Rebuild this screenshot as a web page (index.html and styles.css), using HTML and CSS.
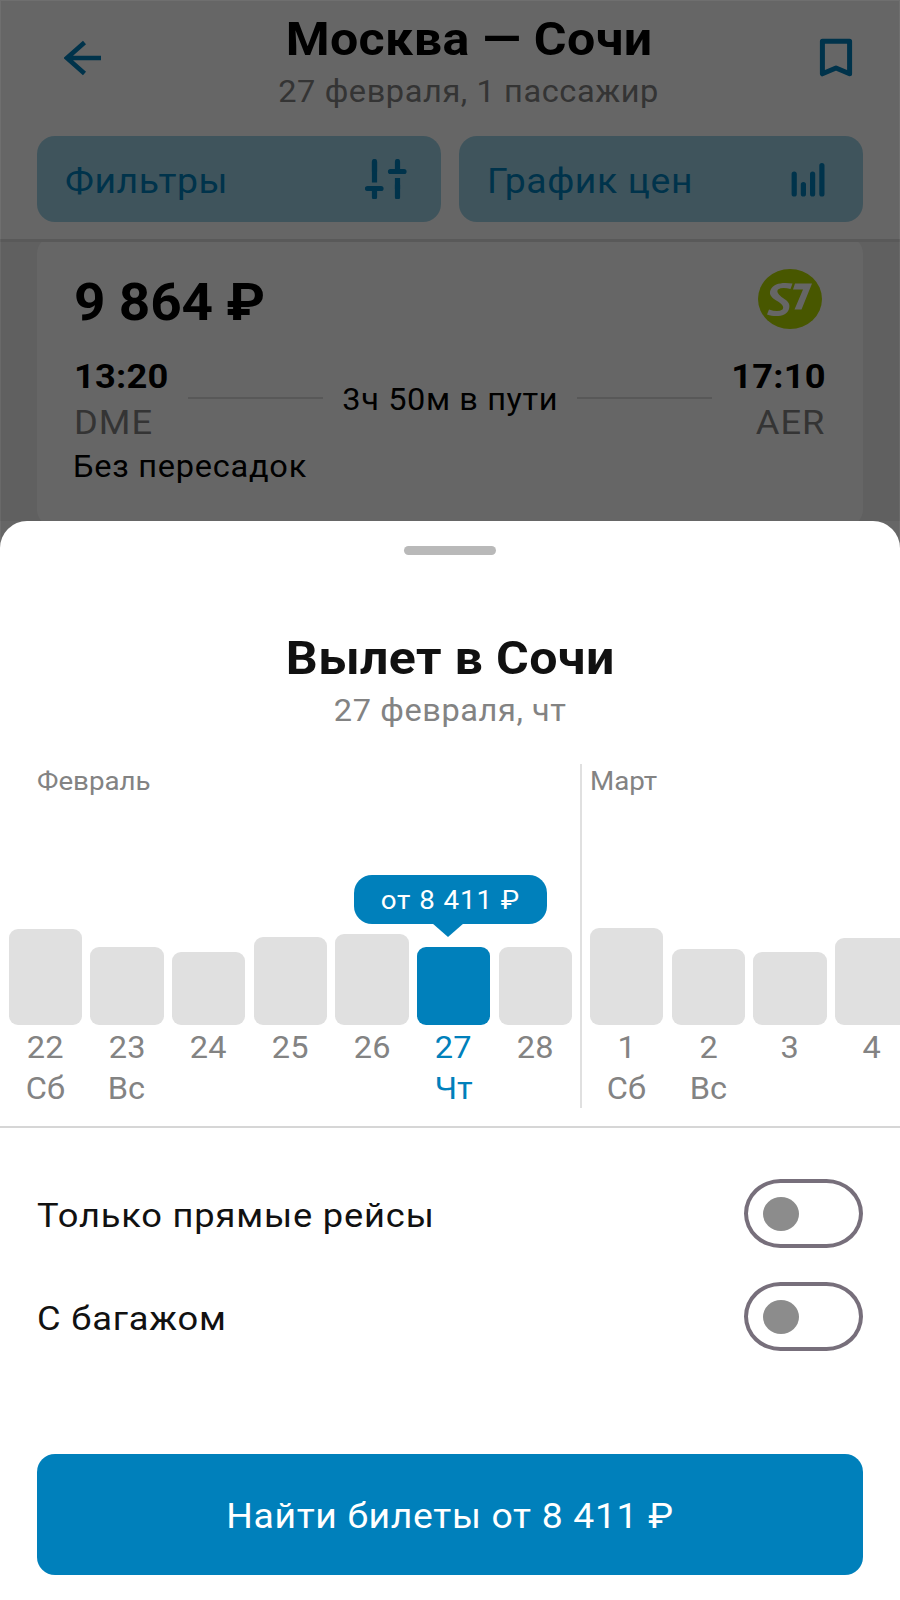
FILE: index.html
```html
<!DOCTYPE html>
<html lang="ru">
<head>
<meta charset="utf-8">
<title>Москва — Сочи</title>
<link rel="stylesheet" href="styles.css">
</head>
<body>
<div class="screen">
  <div class="results">
    <header class="header">
      <div class="topbar">
        <svg class="back" width="38" height="36" viewBox="0 0 38 36"><path d="M37 18H3M20.500 2.500L3 18L20.500 33.500" fill="none" stroke="#007fbb" stroke-width="4.600"/></svg>
        <div class="route">
          <div class="route-title"><span class="t">Москва — Сочи</span></div>
          <div class="route-sub"><span class="t">27 февраля, 1 пассажир</span></div>
        </div>
        <svg class="bookmark" width="34" height="40" viewBox="0 0 34 40"><path d="M3.400 3.200H30.600V35.800L17 30L3.400 35.800Z" fill="none" stroke="#007fbb" stroke-width="5" stroke-linejoin="round"/></svg>
      </div>
      <div class="chips">
        <div class="chip"><span class="t left">Фильтры</span>
          <svg width="42" height="40" viewBox="0 0 42 40" fill="none" stroke="#007fbb" stroke-width="5.200" stroke-linecap="round"><path d="M9.500 3V23.500" stroke-linecap="butt"/><path d="M9.500 2.500V12"/><path d="M2.500 29.500H16M9.500 29.500V38"/><path d="M32.500 2.500V12M25.500 12.500H39"/><path d="M32.500 19V30" stroke-linecap="butt"/><path d="M32.500 26V38"/></svg>
        </div>
        <div class="chip"><span class="t left">График цен</span>
          <svg class="bars-icon" width="34" height="36" viewBox="0 0 34 36" stroke="#007fbb" stroke-width="5.200" stroke-linecap="round"><path d="M3.200 12V32M12.400 22.500V32M21.600 12V32M30.900 3.500V32"/></svg>
        </div>
      </div>
    </header>
    <div class="card">
      <div class="card-top">
        <span class="t left price">9 864 ₽</span>
        <svg class="logo" width="64" height="60" viewBox="0 0 64 60"><ellipse cx="32" cy="30" rx="32" ry="30" fill="#b4d900"/><path d="M34.500 14.500L32.500 20Q24 18 20 20.500C18 23 21 26 25 29C30 32 32.500 35 31 40C28.500 47.500 18 48.500 9 45.500L11 40.500Q20 43.500 24.500 40.500C26.500 37.500 24 35.500 20 32.500C14 29 10.500 26 12.500 21C15.500 14 25 13 34.500 14.500Z" fill="#fff"/><path d="M37 14.500H54L43.500 40.500H36.500L45 20.500H35Z" fill="#fff"/></svg>
      </div>
      <div class="flight">
        <div class="point"><b class="t left">13:20</b><span class="t left code">DME</span></div>
        <i class="rule"></i>
        <div class="duration"><span class="t">3ч 50м в пути</span></div>
        <i class="rule"></i>
        <div class="point end"><b class="t right">17:10</b><span class="t right code">AER</span></div>
      </div>
      <div class="stops"><span class="t left">Без пересадок</span></div>
    </div>
  </div>
  <div class="scrim"></div>
  <section class="sheet">
    <div class="handle"></div>
    <h1 class="sheet-title"><span class="t">Вылет в Сочи</span></h1>
    <div class="sheet-sub"><span class="t">27 февраля, чт</span></div>
    <div class="calendar">
      <div class="month feb">
        <div class="month-name"><span class="t left">Февраль</span></div>
        <div class="days">
          <div class="day"><i class="bar" style="height:96px"></i><span>22</span><span>Сб</span></div>
          <div class="day"><i class="bar" style="height:78px"></i><span>23</span><span>Вс</span></div>
          <div class="day"><i class="bar" style="height:73px"></i><span>24</span></div>
          <div class="day"><i class="bar" style="height:88px"></i><span>25</span></div>
          <div class="day"><i class="bar" style="height:91px"></i><span>26</span></div>
          <div class="day active"><div class="tip"><span class="t">от 8 411 ₽</span></div><i class="bar" style="height:78px"></i><span>27</span><span>Чт</span></div>
          <div class="day"><i class="bar" style="height:78px"></i><span>28</span></div>
        </div>
      </div>
      <div class="month mar">
        <div class="month-name"><span class="t left">Март</span></div>
        <div class="days">
          <div class="day"><i class="bar" style="height:97px"></i><span>1</span><span>Сб</span></div>
          <div class="day"><i class="bar" style="height:76px"></i><span>2</span><span>Вс</span></div>
          <div class="day"><i class="bar" style="height:73px"></i><span>3</span></div>
          <div class="day"><i class="bar" style="height:87px"></i><span>4</span></div>
        </div>
      </div>
    </div>
    <div class="options">
      <div class="option"><span class="t left">Только прямые рейсы</span><div class="switch"><i></i></div></div>
      <div class="option"><span class="t left">С багажом</span><div class="switch"><i></i></div></div>
    </div>
    <div class="cta"><span class="t">Найти билеты от 8 411 ₽</span></div>
  </section>
</div>
</body>
</html>
```
FILE: styles.css
```css
* { box-sizing: border-box; }
body { margin: 0; font-family: Roboto, "Liberation Sans", sans-serif; color: #111; background: #fff; }
.screen { position: relative; width: 900px; height: 1600px; overflow: hidden; display: flex; flex-direction: column; white-space: nowrap; }
.t { display: inline-block; transform: scaleX(1.066); letter-spacing: 0.0185em; }
.left { transform-origin: left; }
.right { transform-origin: right; }

.results { height: 521px; background: #f0f0f0; overflow: hidden; flex: none; color: #000; }
.header { height: 242px; background: #fff; border-bottom: 3px solid #dedede; padding-top: 11px; position: relative; }
.topbar { display: flex; height: 125px; padding: 0 47px 0 64px; }
.back { margin-top: 29px; }
.bookmark { margin-top: 27px; }
.route { flex: 1; text-align: center; padding-left: 17px; }
.route-title { font-size: 47px; line-height: 56px; font-weight: 700; }
.route-title .t { letter-spacing: 0.008em; }
.route-sub { font-size: 30.500px; line-height: 36px; margin-top: 7px; color: #838383; }
.chips { display: flex; gap: 18px; padding: 0 37px; }
.chip { flex: 1; height: 86px; border-radius: 18px; background: #9ed2e6; color: #007fbb; display: flex; align-items: center; justify-content: space-between; padding: 0 34px 0 28px; font-size: 35px; line-height: 64px; }
.chip .t { padding-top: 5px; letter-spacing: 0.017em; }
.bars-icon { margin: 2px 4px 0 0; }

.card { margin: -6px 37px 0; height: 291px; background: #fff; border-radius: 18px; padding: 34px 37px 0; }
.card-top { display: flex; justify-content: space-between; height: 83px; }
.price { font-size: 51.500px; line-height: 66px; font-weight: 700; letter-spacing: -0.003em; }
.logo { margin: -1px 4px 0 0; }
.flight { display: flex; height: 95px; }
.point { width: 93px; font-size: 34px; line-height: 46px; display: flex; flex-direction: column; }
.point b { letter-spacing: 0.007em; align-self: flex-start; }
.end b, .end .code { align-self: flex-end; }
.code { color: #838383; letter-spacing: 0.03em; align-self: flex-start; }
.rule { width: 135px; height: 2px; background: #dcdcdc; margin: 44px 0 0 21px; }
.rule + .point { margin-left: 21px; }
.duration { flex: 1; font-size: 30.500px; line-height: 94px; text-align: center; }
.duration + .rule { margin-left: 0; }
.stops { font-size: 30.500px; line-height: 37px; margin-left: -1px; }
.stops .t { letter-spacing: 0.023em; }

.scrim { position: absolute; left: 0; top: 0; width: 900px; height: 560px; background: rgba(0,0,0,.6); border: 1px solid rgba(255,255,255,.06); border-bottom: 0; }

.sheet { position: relative; flex: 1; background: #fff; border-radius: 27px 27px 0 0; display: flex; flex-direction: column; }
.handle { width: 92px; height: 9px; border-radius: 5px; background: #b9b9b9; margin: 25px auto 0; }
.sheet-title { font-size: 47px; line-height: 56px; font-weight: 700; text-align: center; margin: 75px 0 0; }
.sheet-title .t { letter-spacing: 0.007em; }
.sheet-sub { font-size: 30.500px; line-height: 36px; text-align: center; color: #838383; margin-top: 7px; }
.calendar { display: flex; height: 364px; margin-top: 35px; border-bottom: 2px solid #d6d6d6; overflow: hidden; color: #838383; }
.month { height: 344px; display: flex; flex-direction: column; flex: none; }
.feb { width: 580px; }
.mar { border-left: 2px solid #e0e0e0; }
.month-name { font-size: 26px; line-height: 34px; padding-left: 36.500px; }
.month-name .t { letter-spacing: 0; }
.mar .month-name { padding-left: 8px; }
.days { display: flex; align-items: flex-end; gap: 8.300px; padding-left: 8.500px; height: 311px; }
.mar .days { padding-left: 8px; }
.day { width: 73.400px; flex: none; display: grid; justify-items: center; grid-template-rows: auto 41px 41px; position: relative; font-size: 30.500px; line-height: 43px; }
.day > span { transform: scaleX(1.066); }
.bar { width: 100%; background: #e0e0e0; border-radius: 9px; margin-bottom: 1px; }
.active { color: #0080bb; }
.active .bar { background: #0080bb; }
.tip { position: absolute; bottom: 184px; left: -63px; width: 193px; height: 49px; border-radius: 18px; background: #0080bb; color: #fff; font-size: 26px; line-height: 50px; text-align: center; }
.tip .t { letter-spacing: 0.033em; }
.tip::after { content: ""; position: absolute; left: 78px; top: 48px; border: 16px solid transparent; border-top: 14px solid #0080bb; border-bottom: 0; }
.options { padding: 51px 37px 0; display: grid; gap: 34px; }
.option { height: 69px; display: flex; align-items: center; justify-content: space-between; font-size: 34px; line-height: 69px; }
.option .t { letter-spacing: 0.023em; padding-top: 3px; }
.switch { width: 119px; height: 69px; border: 4px solid #776f7b; border-radius: 37px / 35px; display: flex; align-items: center; padding-left: 15px; }
.switch i { width: 36px; height: 34px; border-radius: 50%; background: #8c8c8c; }
.cta { height: 121px; margin: 103px 37px 0; border-radius: 18px; background: #0080bb; color: #fff; text-align: center; font-size: 35px; line-height: 126px; }
```
